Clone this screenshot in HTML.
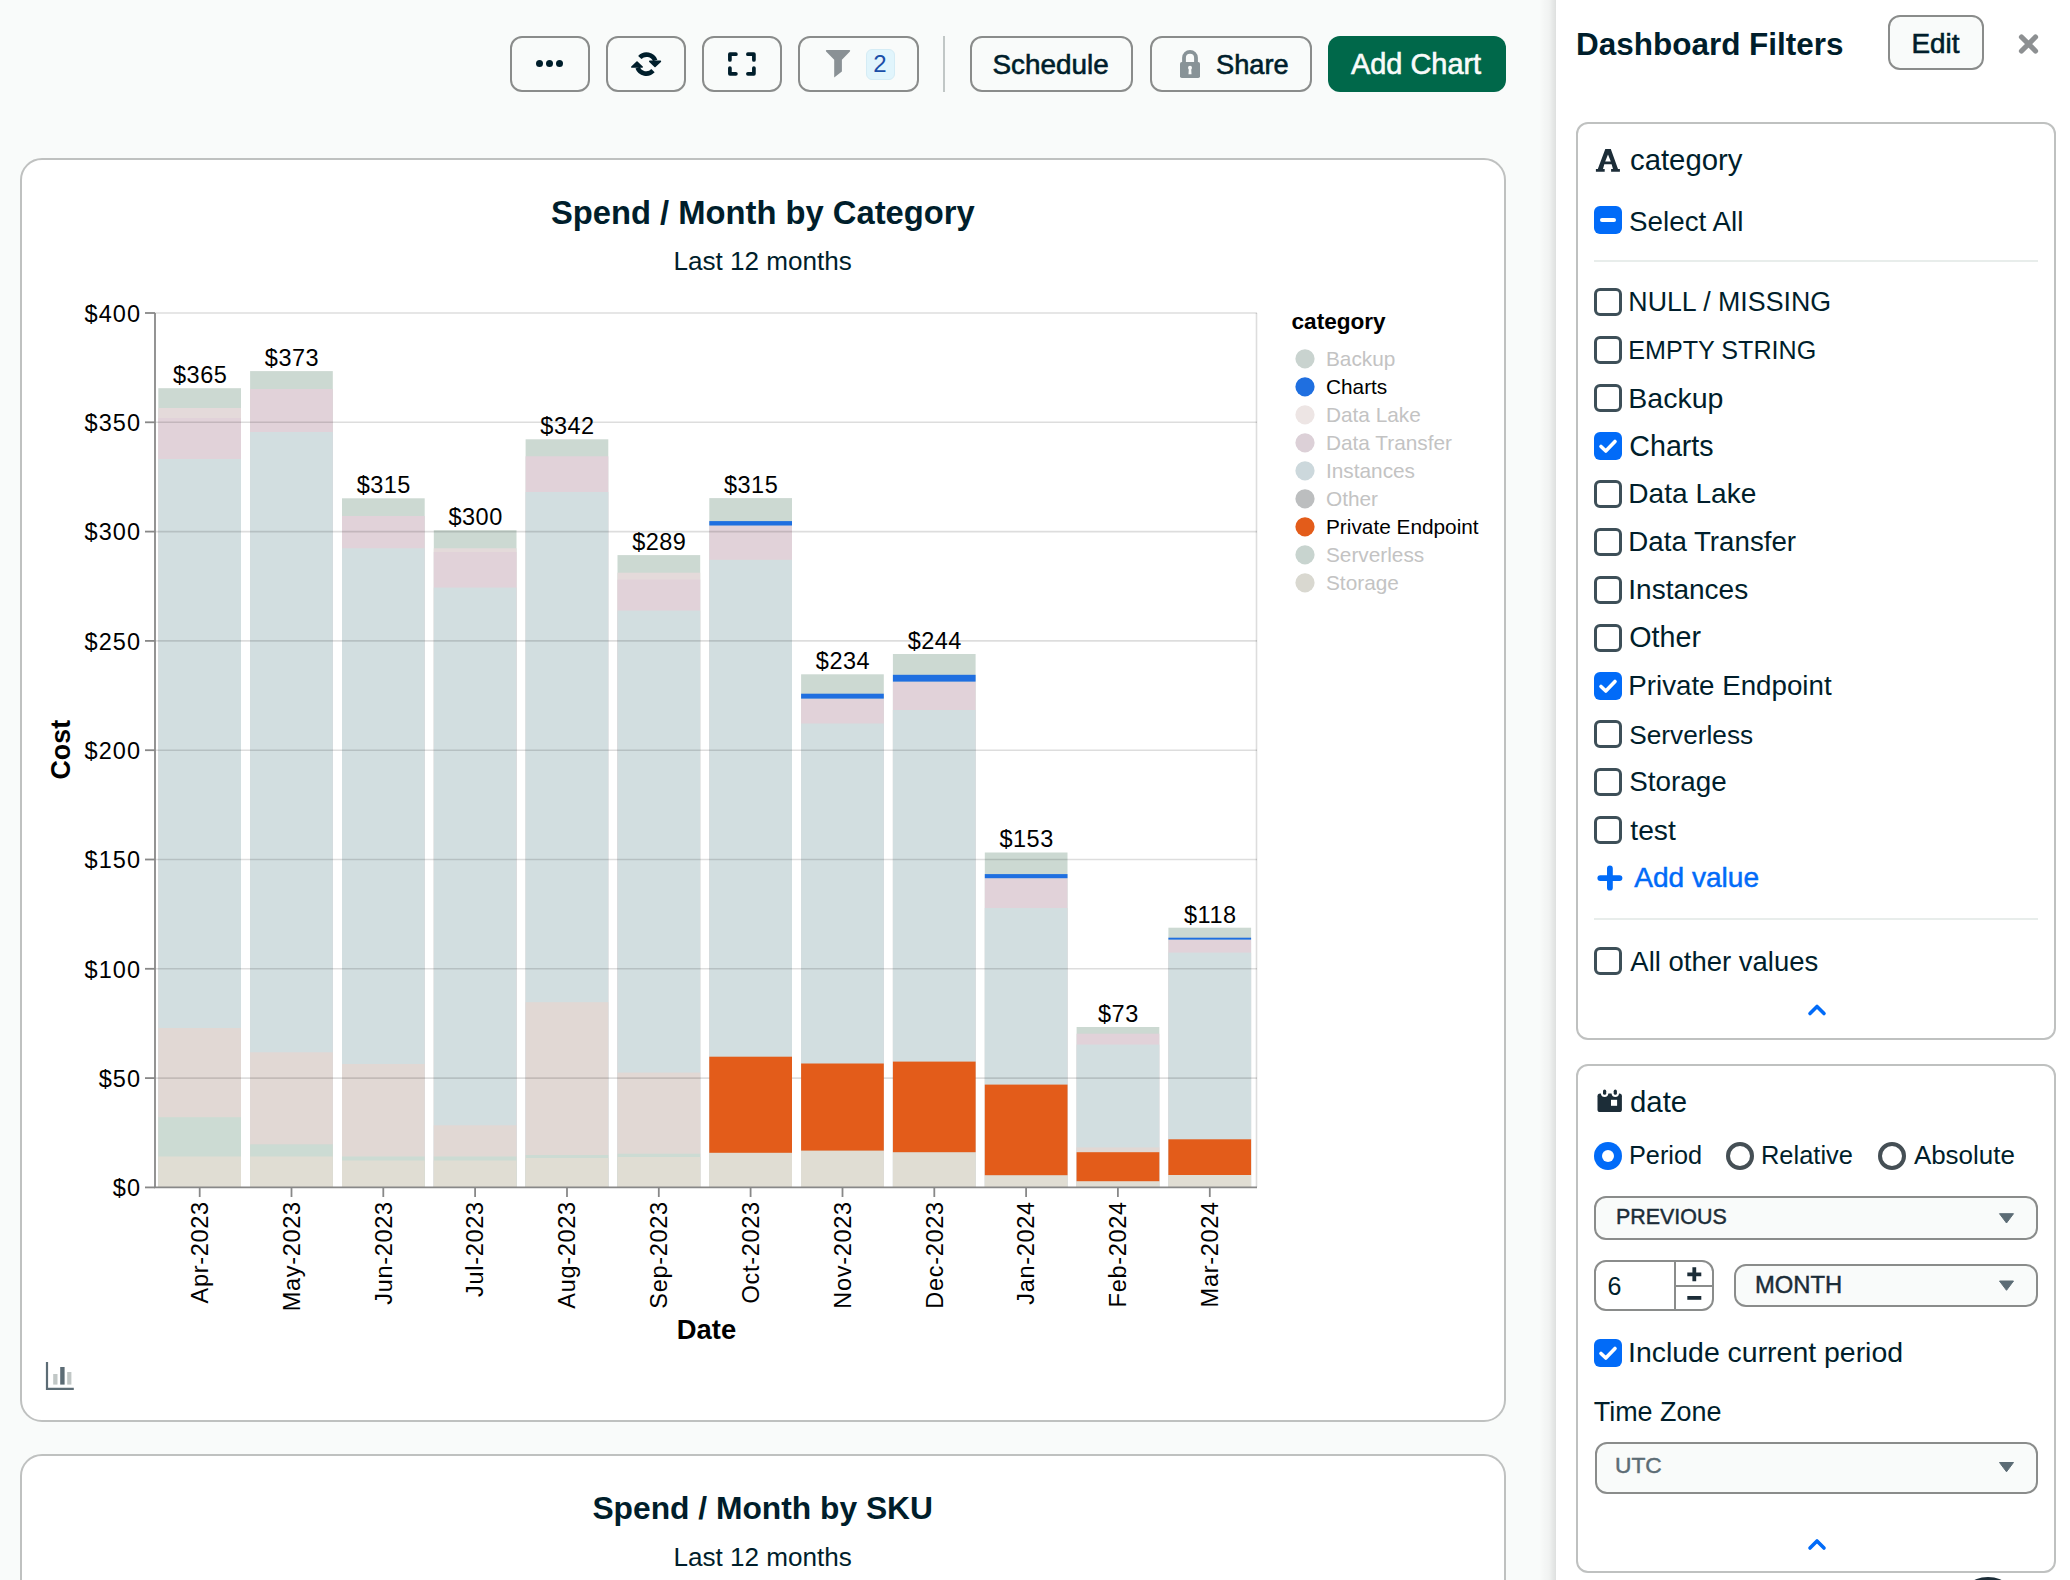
<!DOCTYPE html><html><head><meta charset="utf-8"><title>Dashboard</title><style>
html,body{margin:0;padding:0;}
body{width:2070px;height:1580px;overflow:hidden;position:relative;background:#f9fbfa;font-family:"Liberation Sans", sans-serif;}
.t{position:absolute;white-space:nowrap;}
.b{position:absolute;box-sizing:border-box;}
.btn{position:absolute;box-sizing:border-box;border:2px solid #8a8c8b;border-radius:12px;background:#f9fbfa;}
.cb{position:absolute;box-sizing:border-box;width:28px;height:28px;border:3.8px solid #3d4f58;border-radius:6px;background:#fff;}
.cbon{position:absolute;box-sizing:border-box;width:28px;height:28px;border-radius:6px;background:#016bf8;}
.sel{position:absolute;box-sizing:border-box;border:2px solid #8a8c8b;border-radius:12px;background:#f9fbfa;}
svg{position:absolute;left:0;top:0;overflow:visible;}
</style></head><body>
<div class="btn" style="left:510px;top:36px;width:80px;height:56px;"></div>
<div class="b" style="left:536.0px;top:59.7px;width:7.4px;height:7.4px;border-radius:50%;background:#001e2b;"></div>
<div class="b" style="left:545.8px;top:59.7px;width:7.4px;height:7.4px;border-radius:50%;background:#001e2b;"></div>
<div class="b" style="left:555.8px;top:59.7px;width:7.4px;height:7.4px;border-radius:50%;background:#001e2b;"></div>
<div class="btn" style="left:606px;top:36px;width:80px;height:56px;"></div>
<svg width="2070" height="120" style="left:0;top:0"><path d="M639.8 57.5 A9.3 9.3 0 0 1 655.2 60.5" fill="none" stroke="#001e2b" stroke-width="4.6"/><path d="M649.8 61.3 L660.4 61.3 L655 66.3 Z" fill="#001e2b" stroke="#001e2b" stroke-width="1.6" stroke-linejoin="round"/><path d="M653 70.7 A9.3 9.3 0 0 1 637.6 67.6" fill="none" stroke="#001e2b" stroke-width="4.6"/><path d="M631.8 67 L642.2 67 L637 62 Z" fill="#001e2b" stroke="#001e2b" stroke-width="1.6" stroke-linejoin="round"/></svg>
<div class="btn" style="left:702px;top:36px;width:80px;height:56px;"></div>
<svg width="2070" height="120" style="left:0;top:0"><path d="M729.9 59.9 V54.2 H735.9 M747.9 54.2 H753.9 V59.9 M753.9 68.1 V73.8 H747.9 M735.9 73.8 H729.9 V68.1" fill="none" stroke="#001e2b" stroke-width="3.7" stroke-linecap="round" stroke-linejoin="round"/></svg>
<div class="btn" style="left:798px;top:36px;width:121px;height:56px;"></div>
<svg width="2070" height="120" style="left:0;top:0"><path d="M826.6 50.1 H849.4 Q850.8 50.3 849.9 51.6 L841.9 59.8 V71.4 L834.2 77.4 V59.8 L826.1 51.6 Q825.3 50.3 826.6 50.1 Z" fill="#8a9195"/></svg>
<div class="b" style="left:866.0px;top:48.5px;width:28.5px;height:31.1px;background:#e1f5fc;border-radius:6px;border:1px solid #d5ecf5;"></div>
<div class="t" style="left:873.2px;top:51.9px;font-size:24px;line-height:24px;color:#1a4fa8;font-weight:400;letter-spacing:0px;">2</div>
<div class="b" style="left:943.0px;top:36.0px;width:2.0px;height:56.0px;background:#c1c7c6;"></div>
<div class="btn" style="left:970px;top:36px;width:163px;height:56px;"></div>
<div class="t" style="left:992.5px;top:50.9px;font-size:27.8932px;line-height:27.8932px;color:#001e2b;font-weight:400;letter-spacing:0px;-webkit-text-stroke:0.6px #001e2b;">Schedule</div>
<div class="btn" style="left:1150px;top:36px;width:162px;height:56px;"></div>
<svg width="2070" height="120" style="left:0;top:0"><path d="M1184 63 V57.8 A6 6 0 0 1 1196 57.8 V63" fill="none" stroke="#889397" stroke-width="3.8"/><rect x="1180" y="62" width="20" height="16" rx="1.8" fill="#889397"/><circle cx="1190" cy="67.8" r="2" fill="#f9fbfa"/><path d="M1188.9 68 H1191.1 L1191.5 74.2 H1188.5 Z" fill="#f9fbfa"/></svg>
<div class="t" style="left:1216.1px;top:51.4px;font-size:27.19932px;line-height:27.19932px;color:#001e2b;font-weight:400;letter-spacing:0px;-webkit-text-stroke:0.6px #001e2b;">Share</div>
<div class="b" style="left:1328.0px;top:36.0px;width:178.0px;height:56.0px;background:#00684a;border-radius:12px;"></div>
<div class="t" style="left:1351.0px;top:49.9px;font-size:28.92386px;line-height:28.92386px;color:#f9fbfa;font-weight:400;letter-spacing:0px;-webkit-text-stroke:0.6px #f9fbfa;">Add Chart</div>
<div class="b" style="left:20.0px;top:158.0px;width:1486.0px;height:1264.0px;border:2px solid #bfc1c0;border-radius:22px;background:#fff;"></div>
<div class="t" style="left:551.0px;top:197.3px;font-size:32.74018px;line-height:32.74018px;color:#001e2b;font-weight:700;letter-spacing:0px;">Spend / Month by Category</div>
<div class="t" style="left:673.4px;top:247.9px;font-size:26.099280000000004px;line-height:26.099280000000004px;color:#001e2b;font-weight:400;letter-spacing:0px;">Last 12 months</div>
<div class="b" style="left:20.0px;top:1454.0px;width:1486.0px;height:246.0px;border:2px solid #bfc1c0;border-radius:22px;background:#fff;"></div>
<div class="t" style="left:592.4px;top:1493.2px;font-size:31.78835px;line-height:31.78835px;color:#001e2b;font-weight:700;letter-spacing:0px;">Spend / Month by SKU</div>
<div class="t" style="left:673.4px;top:1543.9px;font-size:26.099280000000004px;line-height:26.099280000000004px;color:#001e2b;font-weight:400;letter-spacing:0px;">Last 12 months</div>
<svg width="2070" height="1580" style="left:0;top:0" font-family="Liberation Sans, sans-serif"><rect x="158.3" y="388.2" width="82.7" height="798.8" fill="#ccd9d2"/><rect x="158.3" y="408.0" width="82.7" height="779.0" fill="#e4dada"/><rect x="158.3" y="418.0" width="82.7" height="769.0" fill="#e1d2d9"/><rect x="158.3" y="459.0" width="82.7" height="728.0" fill="#d2dee0"/><rect x="158.3" y="1028.0" width="82.7" height="159.0" fill="#e1d8d4"/><rect x="158.3" y="1117.2" width="82.7" height="69.8" fill="#ccdbd3"/><rect x="158.3" y="1156.5" width="82.7" height="30.5" fill="#e0ddd3"/><rect x="250.1" y="371.1" width="82.7" height="815.9" fill="#ccd9d2"/><rect x="250.1" y="389.0" width="82.7" height="798.0" fill="#e1d2d9"/><rect x="250.1" y="432.0" width="82.7" height="755.0" fill="#d2dee0"/><rect x="250.1" y="1052.3" width="82.7" height="134.7" fill="#e1d8d4"/><rect x="250.1" y="1144.3" width="82.7" height="42.7" fill="#ccdbd3"/><rect x="250.1" y="1156.5" width="82.7" height="30.5" fill="#e0ddd3"/><rect x="342.0" y="498.3" width="82.7" height="688.7" fill="#ccd9d2"/><rect x="342.0" y="516.0" width="82.7" height="671.0" fill="#e1d2d9"/><rect x="342.0" y="548.3" width="82.7" height="638.7" fill="#d2dee0"/><rect x="342.0" y="1064.0" width="82.7" height="123.0" fill="#e1d8d4"/><rect x="342.0" y="1156.5" width="82.7" height="30.5" fill="#ccdbd3"/><rect x="342.0" y="1160.5" width="82.7" height="26.5" fill="#e0ddd3"/><rect x="433.8" y="530.2" width="82.7" height="656.8" fill="#ccd9d2"/><rect x="433.8" y="548.3" width="82.7" height="638.7" fill="#e4dada"/><rect x="433.8" y="552.0" width="82.7" height="635.0" fill="#e1d2d9"/><rect x="433.8" y="587.6" width="82.7" height="599.4" fill="#d2dee0"/><rect x="433.8" y="1125.3" width="82.7" height="61.7" fill="#e1d8d4"/><rect x="433.8" y="1156.5" width="82.7" height="30.5" fill="#ccdbd3"/><rect x="433.8" y="1160.5" width="82.7" height="26.5" fill="#e0ddd3"/><rect x="525.6" y="439.3" width="82.7" height="747.7" fill="#ccd9d2"/><rect x="525.6" y="456.3" width="82.7" height="730.7" fill="#e1d2d9"/><rect x="525.6" y="492.0" width="82.7" height="695.0" fill="#d2dee0"/><rect x="525.6" y="1002.2" width="82.7" height="184.8" fill="#e1d8d4"/><rect x="525.6" y="1155.0" width="82.7" height="32.0" fill="#ccdbd3"/><rect x="525.6" y="1158.0" width="82.7" height="29.0" fill="#e0ddd3"/><rect x="617.5" y="555.1" width="82.7" height="631.9" fill="#ccd9d2"/><rect x="617.5" y="572.7" width="82.7" height="614.3" fill="#e4dada"/><rect x="617.5" y="579.5" width="82.7" height="607.5" fill="#e1d2d9"/><rect x="617.5" y="610.6" width="82.7" height="576.4" fill="#d2dee0"/><rect x="617.5" y="1072.6" width="82.7" height="114.4" fill="#e1d8d4"/><rect x="617.5" y="1153.7" width="82.7" height="33.3" fill="#ccdbd3"/><rect x="617.5" y="1157.0" width="82.7" height="30.0" fill="#e0ddd3"/><rect x="709.3" y="498.1" width="82.7" height="688.9" fill="#ccd9d2"/><rect x="709.3" y="525.5" width="82.7" height="661.5" fill="#e1d2d9"/><rect x="709.3" y="559.8" width="82.7" height="627.2" fill="#d2dee0"/><rect x="709.3" y="1152.8" width="82.7" height="34.2" fill="#e0ddd3"/><rect x="801.1" y="674.3" width="82.7" height="512.7" fill="#ccd9d2"/><rect x="801.1" y="698.6" width="82.7" height="488.4" fill="#e1d2d9"/><rect x="801.1" y="723.5" width="82.7" height="463.5" fill="#d2dee0"/><rect x="801.1" y="1150.6" width="82.7" height="36.4" fill="#e0ddd3"/><rect x="892.9" y="654.0" width="82.7" height="533.0" fill="#ccd9d2"/><rect x="892.9" y="681.6" width="82.7" height="505.4" fill="#e1d2d9"/><rect x="892.9" y="710.0" width="82.7" height="477.0" fill="#d2dee0"/><rect x="892.9" y="1152.2" width="82.7" height="34.8" fill="#e0ddd3"/><rect x="984.8" y="852.5" width="82.7" height="334.5" fill="#ccd9d2"/><rect x="984.8" y="878.2" width="82.7" height="308.8" fill="#e1d2d9"/><rect x="984.8" y="908.0" width="82.7" height="279.0" fill="#d2dee0"/><rect x="984.8" y="1175.2" width="82.7" height="11.8" fill="#e0ddd3"/><rect x="1076.6" y="1027.0" width="82.7" height="160.0" fill="#ccd9d2"/><rect x="1076.6" y="1033.7" width="82.7" height="153.3" fill="#e1d2d9"/><rect x="1076.6" y="1044.6" width="82.7" height="142.4" fill="#d2dee0"/><rect x="1076.6" y="1147.4" width="82.7" height="39.6" fill="#e1d8d4"/><rect x="1076.6" y="1181.2" width="82.7" height="5.8" fill="#e0ddd3"/><rect x="1168.4" y="927.7" width="82.7" height="259.3" fill="#ccd9d2"/><rect x="1168.4" y="939.6" width="82.7" height="247.4" fill="#e1d2d9"/><rect x="1168.4" y="952.6" width="82.7" height="234.4" fill="#d2dee0"/><rect x="1168.4" y="1175.0" width="82.7" height="12.0" fill="#e0ddd3"/><line x1="155" y1="313.0" x2="1257" y2="313.0" stroke="rgba(0,0,0,0.135)" stroke-width="1.6"/><line x1="155" y1="422.3" x2="1257" y2="422.3" stroke="rgba(0,0,0,0.135)" stroke-width="1.6"/><line x1="155" y1="531.6" x2="1257" y2="531.6" stroke="rgba(0,0,0,0.135)" stroke-width="1.6"/><line x1="155" y1="640.9" x2="1257" y2="640.9" stroke="rgba(0,0,0,0.135)" stroke-width="1.6"/><line x1="155" y1="750.2" x2="1257" y2="750.2" stroke="rgba(0,0,0,0.135)" stroke-width="1.6"/><line x1="155" y1="859.5" x2="1257" y2="859.5" stroke="rgba(0,0,0,0.135)" stroke-width="1.6"/><line x1="155" y1="968.8" x2="1257" y2="968.8" stroke="rgba(0,0,0,0.135)" stroke-width="1.6"/><line x1="155" y1="1078.1" x2="1257" y2="1078.1" stroke="rgba(0,0,0,0.135)" stroke-width="1.6"/><line x1="1256.5" y1="313" x2="1256.5" y2="1187" stroke="rgba(0,0,0,0.135)" stroke-width="1.6"/><rect x="709.3" y="521.1" width="82.7" height="4.4" fill="#1f6fe0"/><rect x="709.3" y="1056.7" width="82.7" height="96.1" fill="#e35c1a"/><rect x="801.1" y="693.7" width="82.7" height="4.9" fill="#1f6fe0"/><rect x="801.1" y="1063.5" width="82.7" height="87.1" fill="#e35c1a"/><rect x="892.9" y="674.8" width="82.7" height="6.8" fill="#1f6fe0"/><rect x="892.9" y="1061.6" width="82.7" height="90.6" fill="#e35c1a"/><rect x="984.8" y="874.1" width="82.7" height="4.1" fill="#1f6fe0"/><rect x="984.8" y="1084.6" width="82.7" height="90.6" fill="#e35c1a"/><rect x="1076.6" y="1152.2" width="82.7" height="29.0" fill="#e35c1a"/><rect x="1168.4" y="937.7" width="82.7" height="1.9" fill="#1f6fe0"/><rect x="1168.4" y="1139.3" width="82.7" height="35.7" fill="#e35c1a"/><line x1="155" y1="313" x2="155" y2="1188" stroke="#888" stroke-width="1.8"/><line x1="154" y1="1187.4" x2="1257" y2="1187.4" stroke="#888" stroke-width="1.8"/><line x1="145" y1="1187.4" x2="155" y2="1187.4" stroke="#888" stroke-width="1.8"/><text x="141.2" y="1196.2" font-size="23.5" letter-spacing="1.1" text-anchor="end" fill="#000">$0</text><line x1="145" y1="1078.1" x2="155" y2="1078.1" stroke="#888" stroke-width="1.8"/><text x="141.2" y="1086.9" font-size="23.5" letter-spacing="1.1" text-anchor="end" fill="#000">$50</text><line x1="145" y1="968.8" x2="155" y2="968.8" stroke="#888" stroke-width="1.8"/><text x="141.2" y="977.6" font-size="23.5" letter-spacing="1.1" text-anchor="end" fill="#000">$100</text><line x1="145" y1="859.5" x2="155" y2="859.5" stroke="#888" stroke-width="1.8"/><text x="141.2" y="868.3" font-size="23.5" letter-spacing="1.1" text-anchor="end" fill="#000">$150</text><line x1="145" y1="750.2" x2="155" y2="750.2" stroke="#888" stroke-width="1.8"/><text x="141.2" y="759.0" font-size="23.5" letter-spacing="1.1" text-anchor="end" fill="#000">$200</text><line x1="145" y1="640.9" x2="155" y2="640.9" stroke="#888" stroke-width="1.8"/><text x="141.2" y="649.7" font-size="23.5" letter-spacing="1.1" text-anchor="end" fill="#000">$250</text><line x1="145" y1="531.6" x2="155" y2="531.6" stroke="#888" stroke-width="1.8"/><text x="141.2" y="540.4" font-size="23.5" letter-spacing="1.1" text-anchor="end" fill="#000">$300</text><line x1="145" y1="422.3" x2="155" y2="422.3" stroke="#888" stroke-width="1.8"/><text x="141.2" y="431.1" font-size="23.5" letter-spacing="1.1" text-anchor="end" fill="#000">$350</text><line x1="145" y1="313.0" x2="155" y2="313.0" stroke="#888" stroke-width="1.8"/><text x="141.2" y="321.8" font-size="23.5" letter-spacing="1.1" text-anchor="end" fill="#000">$400</text><line x1="199.7" y1="1187.4" x2="199.7" y2="1197" stroke="#888" stroke-width="1.8"/><text transform="translate(208.0,1201.2) rotate(-90)" font-size="23.5" letter-spacing="0.7" text-anchor="end" fill="#000">Apr-2023</text><text x="200.2" y="383.0" font-size="23.5" letter-spacing="0.5" text-anchor="middle" fill="#000">$365</text><line x1="291.5" y1="1187.4" x2="291.5" y2="1197" stroke="#888" stroke-width="1.8"/><text transform="translate(299.8,1201.2) rotate(-90)" font-size="23.5" letter-spacing="0.7" text-anchor="end" fill="#000">May-2023</text><text x="292.0" y="365.9" font-size="23.5" letter-spacing="0.5" text-anchor="middle" fill="#000">$373</text><line x1="383.3" y1="1187.4" x2="383.3" y2="1197" stroke="#888" stroke-width="1.8"/><text transform="translate(391.6,1201.2) rotate(-90)" font-size="23.5" letter-spacing="0.7" text-anchor="end" fill="#000">Jun-2023</text><text x="383.8" y="493.1" font-size="23.5" letter-spacing="0.5" text-anchor="middle" fill="#000">$315</text><line x1="475.1" y1="1187.4" x2="475.1" y2="1197" stroke="#888" stroke-width="1.8"/><text transform="translate(483.4,1201.2) rotate(-90)" font-size="23.5" letter-spacing="0.7" text-anchor="end" fill="#000">Jul-2023</text><text x="475.6" y="525.0" font-size="23.5" letter-spacing="0.5" text-anchor="middle" fill="#000">$300</text><line x1="567.0" y1="1187.4" x2="567.0" y2="1197" stroke="#888" stroke-width="1.8"/><text transform="translate(575.3,1201.2) rotate(-90)" font-size="23.5" letter-spacing="0.7" text-anchor="end" fill="#000">Aug-2023</text><text x="567.5" y="434.1" font-size="23.5" letter-spacing="0.5" text-anchor="middle" fill="#000">$342</text><line x1="658.8" y1="1187.4" x2="658.8" y2="1197" stroke="#888" stroke-width="1.8"/><text transform="translate(667.1,1201.2) rotate(-90)" font-size="23.5" letter-spacing="0.7" text-anchor="end" fill="#000">Sep-2023</text><text x="659.3" y="549.9" font-size="23.5" letter-spacing="0.5" text-anchor="middle" fill="#000">$289</text><line x1="750.6" y1="1187.4" x2="750.6" y2="1197" stroke="#888" stroke-width="1.8"/><text transform="translate(758.9,1201.2) rotate(-90)" font-size="23.5" letter-spacing="0.7" text-anchor="end" fill="#000">Oct-2023</text><text x="751.1" y="492.9" font-size="23.5" letter-spacing="0.5" text-anchor="middle" fill="#000">$315</text><line x1="842.5" y1="1187.4" x2="842.5" y2="1197" stroke="#888" stroke-width="1.8"/><text transform="translate(850.8,1201.2) rotate(-90)" font-size="23.5" letter-spacing="0.7" text-anchor="end" fill="#000">Nov-2023</text><text x="843.0" y="669.1" font-size="23.5" letter-spacing="0.5" text-anchor="middle" fill="#000">$234</text><line x1="934.3" y1="1187.4" x2="934.3" y2="1197" stroke="#888" stroke-width="1.8"/><text transform="translate(942.6,1201.2) rotate(-90)" font-size="23.5" letter-spacing="0.7" text-anchor="end" fill="#000">Dec-2023</text><text x="934.8" y="648.8" font-size="23.5" letter-spacing="0.5" text-anchor="middle" fill="#000">$244</text><line x1="1026.1" y1="1187.4" x2="1026.1" y2="1197" stroke="#888" stroke-width="1.8"/><text transform="translate(1034.4,1201.2) rotate(-90)" font-size="23.5" letter-spacing="0.7" text-anchor="end" fill="#000">Jan-2024</text><text x="1026.6" y="847.3" font-size="23.5" letter-spacing="0.5" text-anchor="middle" fill="#000">$153</text><line x1="1117.9" y1="1187.4" x2="1117.9" y2="1197" stroke="#888" stroke-width="1.8"/><text transform="translate(1126.2,1201.2) rotate(-90)" font-size="23.5" letter-spacing="0.7" text-anchor="end" fill="#000">Feb-2024</text><text x="1118.4" y="1021.8" font-size="23.5" letter-spacing="0.5" text-anchor="middle" fill="#000">$73</text><line x1="1209.8" y1="1187.4" x2="1209.8" y2="1197" stroke="#888" stroke-width="1.8"/><text transform="translate(1218.1,1201.2) rotate(-90)" font-size="23.5" letter-spacing="0.7" text-anchor="end" fill="#000">Mar-2024</text><text x="1210.3" y="922.5" font-size="23.5" letter-spacing="0.5" text-anchor="middle" fill="#000">$118</text><text transform="translate(69.8,749.7) rotate(-90)" font-size="26.8" font-weight="700" text-anchor="middle" fill="#000">Cost</text><text x="706.5" y="1338.8" font-size="27.4" font-weight="700" text-anchor="middle" fill="#000">Date</text><text x="1291.5" y="329" font-size="22.6" font-weight="700" fill="#000">category</text><circle cx="1305" cy="358.8" r="9.6" fill="#c9d3cf"/><text x="1326" y="366.0" font-size="20.8" fill="#c3c3c3">Backup</text><circle cx="1305" cy="386.8" r="9.6" fill="#1f6fe0"/><text x="1326" y="394.0" font-size="20.8" fill="#000">Charts</text><circle cx="1305" cy="414.8" r="9.6" fill="#ede5e4"/><text x="1326" y="422.0" font-size="20.8" fill="#c3c3c3">Data Lake</text><circle cx="1305" cy="442.8" r="9.6" fill="#dcd0d7"/><text x="1326" y="450.0" font-size="20.8" fill="#c3c3c3">Data Transfer</text><circle cx="1305" cy="470.8" r="9.6" fill="#ccd8dc"/><text x="1326" y="478.0" font-size="20.8" fill="#c3c3c3">Instances</text><circle cx="1305" cy="498.8" r="9.6" fill="#bcbebf"/><text x="1326" y="506.0" font-size="20.8" fill="#c3c3c3">Other</text><circle cx="1305" cy="526.8" r="9.6" fill="#e35c1a"/><text x="1326" y="534.0" font-size="20.8" fill="#000">Private Endpoint</text><circle cx="1305" cy="554.8" r="9.6" fill="#c8d4cf"/><text x="1326" y="562.0" font-size="20.8" fill="#c3c3c3">Serverless</text><circle cx="1305" cy="582.8" r="9.6" fill="#d9d8d0"/><text x="1326" y="590.0" font-size="20.8" fill="#c3c3c3">Storage</text><path d="M47 1362 V1388.8 H73.8" fill="none" stroke="#5c6c75" stroke-width="2.2"/><rect x="53.2" y="1374" width="4.3" height="10.6" fill="#c1c7c6"/><rect x="60.2" y="1367" width="4.4" height="17.6" fill="#5c6c75"/><rect x="67.2" y="1372" width="4.2" height="12.6" fill="#c1c7c6"/></svg>
<div class="b" style="left:1539.0px;top:0.0px;width:17.0px;height:1580.0px;background:linear-gradient(to right, rgba(0,0,0,0), rgba(0,0,0,0.035) 60%, rgba(0,0,0,0.11));"></div>
<div class="b" style="left:1556.0px;top:0.0px;width:514.0px;height:1580.0px;background:#fff;"></div>
<div class="t" style="left:1576.0px;top:29.3px;font-size:31.477400000000003px;line-height:31.477400000000003px;color:#001e2b;font-weight:700;letter-spacing:0px;">Dashboard Filters</div>
<div class="btn" style="left:1888px;top:15px;width:96px;height:55px;"></div>
<div class="t" style="left:1911.5px;top:30.3px;font-size:27.856399999999997px;line-height:27.856399999999997px;color:#001e2b;font-weight:400;letter-spacing:0px;-webkit-text-stroke:0.6px #001e2b;">Edit</div>
<svg width="2070" height="120" style="left:0;top:0"><path d="M2021.5 37 L2035.5 51 M2035.5 37 L2021.5 51" stroke="#8d9092" stroke-width="5.2" stroke-linecap="round"/></svg>
<div class="b" style="left:1576.0px;top:122.0px;width:480.0px;height:918.0px;border:2px solid #bfc1c0;border-radius:12px;background:#fff;"></div>
<svg width="2070" height="1580" style="left:0;top:0"><path fill-rule="evenodd" fill="#1c2d38" d="M1605.3 149 H1610.8 L1618 169.1 H1619.9 V171.8 H1611.1 V169.1 H1613 L1611.6 164.3 H1604.3 L1603 169.1 H1604.7 V171.8 H1595.9 V169.1 H1597.8 Z M1608 154.6 L1610.8 161.4 H1605.2 Z"/></svg>
<div class="t" style="left:1630.0px;top:145.2px;font-size:29.343600000000002px;line-height:29.343600000000002px;color:#001e2b;font-weight:400;letter-spacing:0px;">category</div>
<div class="cbon" style="left:1594px;top:206px;"></div>
<div class="b" style="left:1600.2px;top:218.0px;width:15.6px;height:4.3px;background:#fff;border-radius:2px;"></div>
<div class="t" style="left:1629.0px;top:207.5px;font-size:27.81324px;line-height:27.81324px;color:#001e2b;font-weight:400;letter-spacing:0px;">Select All</div>
<div class="b" style="left:1594.0px;top:260.0px;width:444.0px;height:2.0px;background:#e8edeb;"></div>
<div class="cb" style="left:1594px;top:288px;"></div>
<div class="t" style="left:1628.3px;top:289.0px;font-size:26.771160000000002px;line-height:26.771160000000002px;color:#001e2b;font-weight:400;letter-spacing:0px;">NULL / MISSING</div>
<div class="cb" style="left:1594px;top:336px;"></div>
<div class="t" style="left:1628.3px;top:338.4px;font-size:25.110039999999998px;line-height:25.110039999999998px;color:#001e2b;font-weight:400;letter-spacing:0px;">EMPTY STRING</div>
<div class="cb" style="left:1594px;top:384px;"></div>
<div class="t" style="left:1628.3px;top:383.6px;font-size:28.523399999999995px;line-height:28.523399999999995px;color:#001e2b;font-weight:400;letter-spacing:0px;">Backup</div>
<div class="cbon" style="left:1594px;top:432px;"><svg width="28" height="28" style="left:0;top:0"><path d="M7 14.5 L11.8 19 L21 9.5" fill="none" stroke="#fff" stroke-width="3.6" stroke-linecap="round" stroke-linejoin="round"/></svg></div>
<div class="t" style="left:1629.3px;top:431.5px;font-size:28.632999999999996px;line-height:28.632999999999996px;color:#001e2b;font-weight:400;letter-spacing:0px;">Charts</div>
<div class="cb" style="left:1594px;top:480px;"></div>
<div class="t" style="left:1628.3px;top:479.9px;font-size:28.105760000000004px;line-height:28.105760000000004px;color:#001e2b;font-weight:400;letter-spacing:0px;">Data Lake</div>
<div class="cb" style="left:1594px;top:528px;"></div>
<div class="t" style="left:1628.3px;top:528.2px;font-size:27.7032px;line-height:27.7032px;color:#001e2b;font-weight:400;letter-spacing:0px;">Data Transfer</div>
<div class="cb" style="left:1594px;top:576px;"></div>
<div class="t" style="left:1628.3px;top:576.0px;font-size:28.02416px;line-height:28.02416px;color:#001e2b;font-weight:400;letter-spacing:0px;">Instances</div>
<div class="cb" style="left:1594px;top:624px;"></div>
<div class="t" style="left:1629.3px;top:623.4px;font-size:28.67364px;line-height:28.67364px;color:#001e2b;font-weight:400;letter-spacing:0px;">Other</div>
<div class="cbon" style="left:1594px;top:672px;"><svg width="28" height="28" style="left:0;top:0"><path d="M7 14.5 L11.8 19 L21 9.5" fill="none" stroke="#fff" stroke-width="3.6" stroke-linecap="round" stroke-linejoin="round"/></svg></div>
<div class="t" style="left:1628.3px;top:672.2px;font-size:27.712229999999998px;line-height:27.712229999999998px;color:#001e2b;font-weight:400;letter-spacing:0px;">Private Endpoint</div>
<div class="cb" style="left:1594px;top:720px;"></div>
<div class="t" style="left:1629.3px;top:721.5px;font-size:26.233439999999998px;line-height:26.233439999999998px;color:#001e2b;font-weight:400;letter-spacing:0px;">Serverless</div>
<div class="cb" style="left:1594px;top:768px;"></div>
<div class="t" style="left:1629.3px;top:768.2px;font-size:27.81002px;line-height:27.81002px;color:#001e2b;font-weight:400;letter-spacing:0px;">Storage</div>
<div class="cb" style="left:1594px;top:816px;"></div>
<div class="t" style="left:1630.3px;top:815.8px;font-size:28.240320000000004px;line-height:28.240320000000004px;color:#001e2b;font-weight:400;letter-spacing:0px;">test</div>
<svg width="2070" height="1580" style="left:0;top:0"><path d="M1609.9 868.5 V887.7 M1600.3 878.1 H1619.5" stroke="#016bf8" stroke-width="5.8" stroke-linecap="round"/></svg>
<div class="t" style="left:1634.3px;top:864.1px;font-size:28.05px;line-height:28.05px;color:#016bf8;font-weight:400;letter-spacing:0px;-webkit-text-stroke:0.5px #016bf8;">Add value</div>
<div class="b" style="left:1594.0px;top:918.0px;width:444.0px;height:2.0px;background:#e8edeb;"></div>
<div class="cb" style="left:1594px;top:946.6px;"></div>
<div class="t" style="left:1630.3px;top:947.7px;font-size:27.49648px;line-height:27.49648px;color:#001e2b;font-weight:400;letter-spacing:0px;">All other values</div>
<svg width="2070" height="1580" style="left:0;top:0"><path d="M1810 1013.5 L1817 1006.5 L1824 1013.5" fill="none" stroke="#016bf8" stroke-width="3.6" stroke-linecap="round" stroke-linejoin="round"/></svg>
<div class="b" style="left:1576.0px;top:1064.0px;width:480.0px;height:509.0px;border:2px solid #bfc1c0;border-radius:12px;background:#fff;"></div>
<svg width="2070" height="1580" style="left:0;top:0"><rect x="1597.5" y="1093.6" width="24.4" height="18.4" rx="2.6" fill="#1c2d38"/><circle cx="1604.6" cy="1093.3" r="3.7" fill="#fff"/><circle cx="1615.3" cy="1093.3" r="3.7" fill="#fff"/><rect x="1603" y="1089.6" width="3.2" height="5.2" rx="1.6" fill="#1c2d38"/><rect x="1613.7" y="1089.6" width="3.2" height="5.2" rx="1.6" fill="#1c2d38"/><rect x="1611" y="1099.8" width="6.1" height="6" fill="#fff"/></svg>
<div class="t" style="left:1630.0px;top:1087.1px;font-size:29.366910000000004px;line-height:29.366910000000004px;color:#001e2b;font-weight:400;letter-spacing:0px;">date</div>
<div class="b" style="left:1594px;top:1142px;width:28px;height:28px;border-radius:50%;background:#016bf8;"></div>
<div class="b" style="left:1602.0px;top:1150.0px;width:12.0px;height:12.0px;border-radius:50%;background:#fff;"></div>
<div class="t" style="left:1629.0px;top:1143.2px;font-size:25.2642px;line-height:25.2642px;color:#001e2b;font-weight:400;letter-spacing:0px;">Period</div>
<div class="b" style="left:1726px;top:1142px;width:28px;height:28px;border-radius:50%;border:4px solid #454f55;"></div>
<div class="t" style="left:1761.0px;top:1143.0px;font-size:25.45854px;line-height:25.45854px;color:#001e2b;font-weight:400;letter-spacing:0px;">Relative</div>
<div class="b" style="left:1878px;top:1142px;width:28px;height:28px;border-radius:50%;border:4px solid #454f55;"></div>
<div class="t" style="left:1913.9px;top:1142.6px;font-size:25.945px;line-height:25.945px;color:#001e2b;font-weight:400;letter-spacing:0px;">Absolute</div>
<div class="sel" style="left:1594px;top:1195.5px;width:443.5px;height:44px;"></div>
<div class="t" style="left:1616.0px;top:1206.5px;font-size:21.438899999999997px;line-height:21.438899999999997px;color:#1c2d38;font-weight:400;letter-spacing:0px;-webkit-text-stroke:0.45px #1c2d38;">PREVIOUS</div>
<svg width="2070" height="1580" style="left:0;top:0"><path d="M1999.5 1213.7 H2013.5 L2006.5 1223.0 Z" fill="#5c6c75" stroke="#5c6c75" stroke-width="1" stroke-linejoin="round"/></svg>
<div class="b" style="left:1594px;top:1259.6px;width:119.5px;height:51.6px;border:2px solid #8a8c8b;border-radius:12px;background:#fff;"></div>
<div class="b" style="left:1673.7px;top:1261.0px;width:2.0px;height:49.0px;background:#8a8c8b;"></div>
<div class="b" style="left:1675.0px;top:1285.0px;width:37.0px;height:2.0px;background:#8a8c8b;"></div>
<div class="t" style="left:1607.5px;top:1274.4px;font-size:25px;line-height:25px;color:#001e2b;font-weight:400;letter-spacing:0px;">6</div>
<svg width="2070" height="1580" style="left:0;top:0"><path d="M1694.3 1267.3 V1281.3 M1687.3 1274.3 H1701.3" stroke="#1c2d38" stroke-width="3.8"/><path d="M1687.3 1297.9 H1701.3" stroke="#1c2d38" stroke-width="3.8"/></svg>
<div class="sel" style="left:1734px;top:1263.6px;width:303.5px;height:43.4px;"></div>
<div class="t" style="left:1755.0px;top:1272.6px;font-size:23.82828px;line-height:23.82828px;color:#1c2d38;font-weight:400;letter-spacing:0px;-webkit-text-stroke:0.45px #1c2d38;">MONTH</div>
<svg width="2070" height="1580" style="left:0;top:0"><path d="M1999.5 1281 H2013.5 L2006.5 1290.3 Z" fill="#5c6c75" stroke="#5c6c75" stroke-width="1" stroke-linejoin="round"/></svg>
<div class="cbon" style="left:1594px;top:1338.5px;"><svg width="28" height="28" style="left:0;top:0"><path d="M7 14.5 L11.8 19 L21 9.5" fill="none" stroke="#fff" stroke-width="3.6" stroke-linecap="round" stroke-linejoin="round"/></svg></div>
<div class="t" style="left:1628.0px;top:1337.9px;font-size:28.44405px;line-height:28.44405px;color:#001e2b;font-weight:400;letter-spacing:0px;">Include current period</div>
<div class="t" style="left:1593.7px;top:1399.2px;font-size:26.959680000000002px;line-height:26.959680000000002px;color:#001e2b;font-weight:400;letter-spacing:0px;">Time Zone</div>
<div class="sel" style="left:1594.5px;top:1441.5px;width:443px;height:52.5px;"></div>
<div class="t" style="left:1615.0px;top:1453.7px;font-size:22.796359999999996px;line-height:22.796359999999996px;color:#5c6c75;font-weight:400;letter-spacing:0px;-webkit-text-stroke:0.45px #5c6c75;">UTC</div>
<svg width="2070" height="1580" style="left:0;top:0"><path d="M1999.5 1462.5 H2013.5 L2006.5 1471.8 Z" fill="#5c6c75" stroke="#5c6c75" stroke-width="1" stroke-linejoin="round"/></svg>
<svg width="2070" height="1580" style="left:0;top:0"><path d="M1810 1548 L1817 1541 L1824 1548" fill="none" stroke="#016bf8" stroke-width="3.6" stroke-linecap="round" stroke-linejoin="round"/></svg>
<div class="b" style="left:1972.0px;top:1577.0px;width:32.0px;height:13.0px;border-radius:50%;background:#1c2d38;"></div>
</body></html>
